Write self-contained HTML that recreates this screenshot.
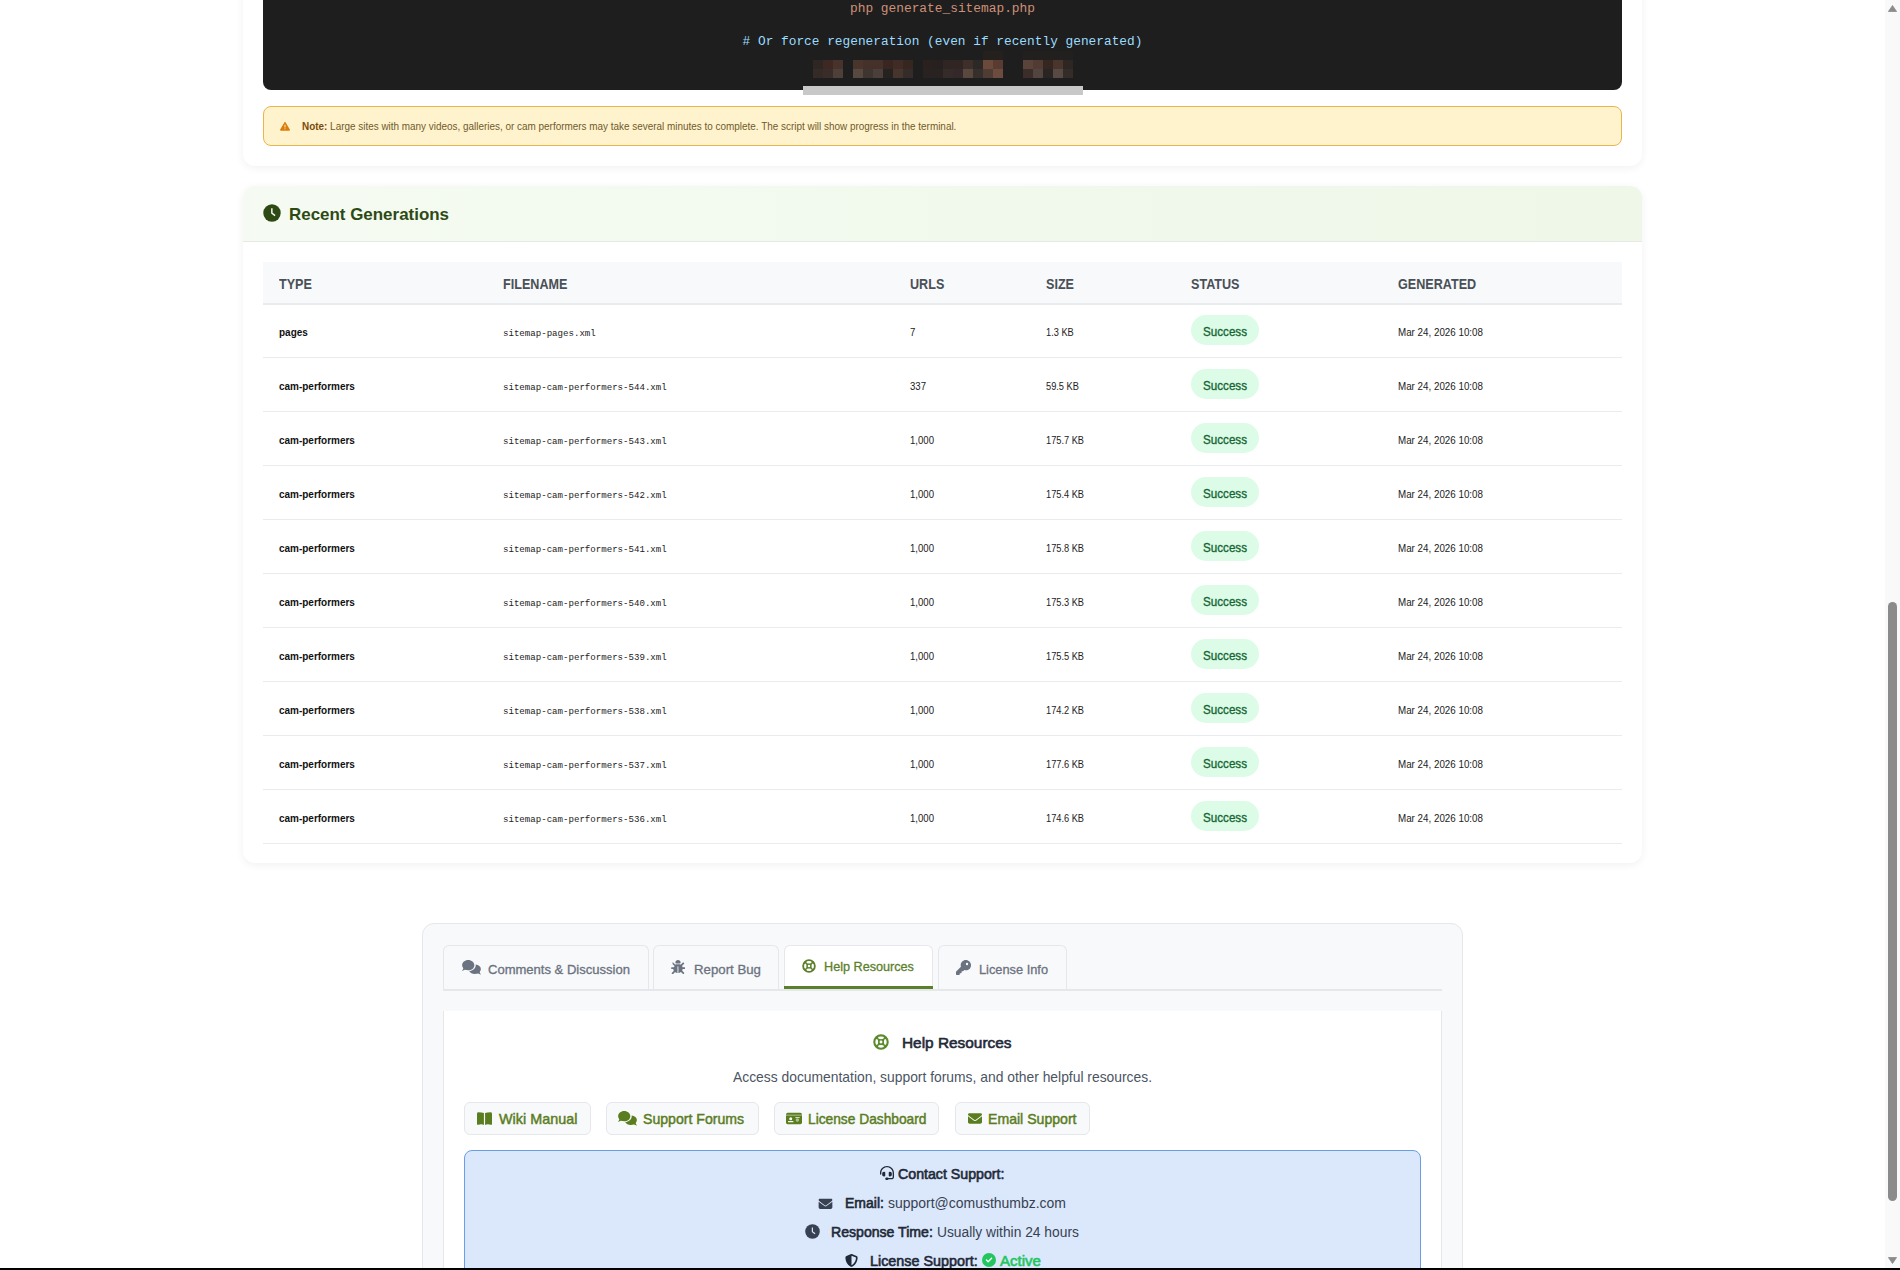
<!DOCTYPE html>
<html><head><meta charset="utf-8"><title>Sitemap Generator</title>
<style>
html,body{margin:0;padding:0;}
body{width:1900px;height:1270px;overflow:hidden;position:relative;background:#ffffff;font-family:'Liberation Sans',sans-serif;}
.b{position:absolute;box-sizing:border-box;}
.t{position:absolute;white-space:nowrap;}
</style></head><body>

<div class="b" style="left:243px;top:-300px;width:1399px;height:466px;background:#fff;border-radius:12px;box-shadow:0 2px 8px rgba(0,0,0,0.06);"></div>
<div class="b" style="left:263px;top:-200px;width:1359px;height:290px;background:#1e1e1e;border-radius:8px;"></div>
<div class="t" style="left:342.5px;width:1200px;text-align:center;top:3px;font-size:12.85px;line-height:12.85px;font-weight:400;color:#ce9178;font-family:'Liberation Mono', monospace;">php generate_sitemap.php</div>
<div class="t" style="left:342.5px;width:1200px;text-align:center;top:36px;font-size:12.82px;line-height:12.82px;font-weight:400;color:#9cdcfe;font-family:'Liberation Mono', monospace;"># Or force regeneration (even if recently generated)</div>
<div class="b" style="left:813px;top:60px;width:10px;height:9px;background:#2e2623;"></div>
<div class="b" style="left:823px;top:60px;width:10px;height:9px;background:#3d2824;"></div>
<div class="b" style="left:833px;top:60px;width:10px;height:9px;background:#47332c;"></div>
<div class="b" style="left:853px;top:60px;width:10px;height:9px;background:#4a352d;"></div>
<div class="b" style="left:863px;top:60px;width:10px;height:9px;background:#45302a;"></div>
<div class="b" style="left:873px;top:60px;width:10px;height:9px;background:#45302a;"></div>
<div class="b" style="left:883px;top:60px;width:10px;height:9px;background:#3a2620;"></div>
<div class="b" style="left:893px;top:60px;width:10px;height:9px;background:#402c25;"></div>
<div class="b" style="left:903px;top:60px;width:10px;height:9px;background:#35261f;"></div>
<div class="b" style="left:923px;top:60px;width:10px;height:9px;background:#2a211e;"></div>
<div class="b" style="left:933px;top:60px;width:10px;height:9px;background:#262120;"></div>
<div class="b" style="left:943px;top:60px;width:10px;height:9px;background:#302522;"></div>
<div class="b" style="left:953px;top:60px;width:10px;height:9px;background:#302522;"></div>
<div class="b" style="left:963px;top:60px;width:10px;height:9px;background:#3f2f2b;"></div>
<div class="b" style="left:973px;top:60px;width:10px;height:9px;background:#2c2825;"></div>
<div class="b" style="left:983px;top:60px;width:10px;height:9px;background:#6b4a3b;"></div>
<div class="b" style="left:993px;top:60px;width:10px;height:9px;background:#5a3b31;"></div>
<div class="b" style="left:1023px;top:60px;width:10px;height:9px;background:#5a4439;"></div>
<div class="b" style="left:1033px;top:60px;width:10px;height:9px;background:#523b33;"></div>
<div class="b" style="left:1043px;top:60px;width:10px;height:9px;background:#35261f;"></div>
<div class="b" style="left:1053px;top:60px;width:10px;height:9px;background:#4a352d;"></div>
<div class="b" style="left:1063px;top:60px;width:10px;height:9px;background:#2e2623;"></div>
<div class="b" style="left:813px;top:69px;width:10px;height:9px;background:#342a26;"></div>
<div class="b" style="left:823px;top:69px;width:10px;height:9px;background:#3a2d29;"></div>
<div class="b" style="left:833px;top:69px;width:10px;height:9px;background:#4f3f39;"></div>
<div class="b" style="left:853px;top:69px;width:10px;height:9px;background:#574840;"></div>
<div class="b" style="left:863px;top:69px;width:10px;height:9px;background:#3e3531;"></div>
<div class="b" style="left:873px;top:69px;width:10px;height:9px;background:#4a3f3a;"></div>
<div class="b" style="left:883px;top:69px;width:10px;height:9px;background:#262220;"></div>
<div class="b" style="left:893px;top:69px;width:10px;height:9px;background:#45352d;"></div>
<div class="b" style="left:903px;top:69px;width:10px;height:9px;background:#352b28;"></div>
<div class="b" style="left:923px;top:69px;width:10px;height:9px;background:#282220;"></div>
<div class="b" style="left:933px;top:69px;width:10px;height:9px;background:#282220;"></div>
<div class="b" style="left:943px;top:69px;width:10px;height:9px;background:#352b28;"></div>
<div class="b" style="left:953px;top:69px;width:10px;height:9px;background:#35282a;"></div>
<div class="b" style="left:963px;top:69px;width:10px;height:9px;background:#5a473d;"></div>
<div class="b" style="left:973px;top:69px;width:10px;height:9px;background:#35302c;"></div>
<div class="b" style="left:983px;top:69px;width:10px;height:9px;background:#4f3c33;"></div>
<div class="b" style="left:993px;top:69px;width:10px;height:9px;background:#6b4c3f;"></div>
<div class="b" style="left:1023px;top:69px;width:10px;height:9px;background:#3b2e2a;"></div>
<div class="b" style="left:1033px;top:69px;width:10px;height:9px;background:#524540;"></div>
<div class="b" style="left:1043px;top:69px;width:10px;height:9px;background:#2a2523;"></div>
<div class="b" style="left:1053px;top:69px;width:10px;height:9px;background:#574a45;"></div>
<div class="b" style="left:1063px;top:69px;width:10px;height:9px;background:#332c29;"></div>
<div class="b" style="left:983px;top:51px;width:20px;height:9px;background:#23201e;"></div>
<div class="b" style="left:1023px;top:51px;width:50px;height:9px;background:#22201e;"></div>
<div class="b" style="left:803px;top:86px;width:280px;height:9px;background:#c8c8c8;"></div>
<div class="b" style="left:263px;top:106px;width:1359px;height:40px;background:#fff3cd;border:1px solid #e9b54f;border-radius:8px;"></div>
<svg class="b" style="left:280px;top:121.8px;width:10px;height:9px" viewBox="0 24 512 464" fill="#d97e0e"><path d="M256 24c14 0 27 8 34 20l216 368c7 12 7 27 0 40s-20 20-34 20H40c-14 0-27-8-34-20s-7-28 0-40L222 44c7-12 20-20 34-20z"/><path d="M232 168h48v140h-48zM256 340a28 28 0 1 1 0 56 28 28 0 1 1 0-56z" fill="#fff3cd"/></svg>
<div class="t" style="left:302px;top:122px;font-size:9.93px;line-height:9.93px;font-weight:400;color:#6f5a2c;font-family:'Liberation Sans', sans-serif;transform:scaleY(1.08);transform-origin:0 8px;"><b style="color:#7a4a0c">Note:</b> Large sites with many videos, galleries, or cam performers may take several minutes to complete. The script will show progress in the terminal.</div>
<div class="b" style="left:243px;top:186px;width:1399px;height:677px;background:#fff;border-radius:12px;box-shadow:0 2px 8px rgba(0,0,0,0.06);overflow:hidden;"></div>
<div class="b" style="left:243px;top:186px;width:1399px;height:56px;background:linear-gradient(90deg,#f5fbf2,#eef7e8);border-bottom:1px solid #e6e8e6;border-radius:12px 12px 0 0;"></div>
<svg class="b" style="left:263px;top:204px;width:18px;height:18px" viewBox="0 0 512 512" fill="#2d4a14"><circle cx="256" cy="256" r="248"/><path d="M232 120h40v132l84 62-24 32-100-74z" fill="#fff"/></svg>
<div class="t" style="left:289px;top:207px;font-size:16.94px;line-height:16.94px;font-weight:700;color:#2d4a14;font-family:'Liberation Sans', sans-serif;">Recent Generations</div>
<div class="b" style="left:263px;top:262px;width:1359px;height:43px;background:#f8f9fa;border-bottom:2px solid #e9ecef;"></div>
<div class="t" style="left:279px;top:279px;font-size:12.6px;line-height:12.6px;font-weight:700;color:#495057;font-family:'Liberation Sans', sans-serif;transform:scaleY(1.15);transform-origin:0 10px;">TYPE</div>
<div class="t" style="left:503px;top:279px;font-size:12.6px;line-height:12.6px;font-weight:700;color:#495057;font-family:'Liberation Sans', sans-serif;transform:scaleY(1.15);transform-origin:0 10px;">FILENAME</div>
<div class="t" style="left:910px;top:279px;font-size:12.6px;line-height:12.6px;font-weight:700;color:#495057;font-family:'Liberation Sans', sans-serif;transform:scaleY(1.15);transform-origin:0 10px;">URLS</div>
<div class="t" style="left:1046px;top:279px;font-size:12.6px;line-height:12.6px;font-weight:700;color:#495057;font-family:'Liberation Sans', sans-serif;transform:scaleY(1.15);transform-origin:0 10px;">SIZE</div>
<div class="t" style="left:1191px;top:279px;font-size:12.6px;line-height:12.6px;font-weight:700;color:#495057;font-family:'Liberation Sans', sans-serif;transform:scaleY(1.15);transform-origin:0 10px;">STATUS</div>
<div class="t" style="left:1398px;top:279px;font-size:12.6px;line-height:12.6px;font-weight:700;color:#495057;font-family:'Liberation Sans', sans-serif;transform:scaleY(1.15);transform-origin:0 10px;">GENERATED</div>
<div class="b" style="left:263px;top:357px;width:1359px;height:1px;background:#e9ecef;"></div>
<div class="t" style="left:279px;top:328px;font-size:9.98px;line-height:9.98px;font-weight:700;color:#111;font-family:'Liberation Sans', sans-serif;transform:scaleY(1.15);transform-origin:0 8px;">pages</div>
<div class="t" style="left:503px;top:329px;font-size:9.11px;line-height:9.11px;font-weight:400;color:#222;font-family:'Liberation Mono', monospace;">sitemap-pages.xml</div>
<div class="t" style="left:910px;top:328px;font-size:9.6px;line-height:9.6px;font-weight:400;color:#222;font-family:'Liberation Sans', sans-serif;transform:scaleY(1.2);transform-origin:0 8px;">7</div>
<div class="t" style="left:1046px;top:329px;font-size:9.24px;line-height:9.24px;font-weight:400;color:#222;font-family:'Liberation Sans', sans-serif;transform:scaleY(1.2);transform-origin:0 7px;">1.3 KB</div>
<div class="b" style="left:1191px;top:315.4px;width:68px;height:29.4px;background:#dcfce7;border-radius:15px;"></div>
<div class="t" style="left:625px;width:1200px;text-align:center;top:326px;font-size:11.64px;line-height:11.64px;font-weight:400;color:#166534;font-family:'Liberation Sans', sans-serif;-webkit-text-stroke:0.3px currentColor;transform:scaleY(1.15);transform-origin:0 10px;">Success</div>
<div class="t" style="left:1398px;top:328px;font-size:9.8px;line-height:9.8px;font-weight:400;color:#222;font-family:'Liberation Sans', sans-serif;transform:scaleY(1.2);transform-origin:0 8px;">Mar 24, 2026 10:08</div>
<div class="b" style="left:263px;top:411px;width:1359px;height:1px;background:#e9ecef;"></div>
<div class="t" style="left:279px;top:382px;font-size:9.98px;line-height:9.98px;font-weight:700;color:#111;font-family:'Liberation Sans', sans-serif;transform:scaleY(1.15);transform-origin:0 8px;">cam-performers</div>
<div class="t" style="left:503px;top:383px;font-size:9.11px;line-height:9.11px;font-weight:400;color:#222;font-family:'Liberation Mono', monospace;">sitemap-cam-performers-544.xml</div>
<div class="t" style="left:910px;top:382px;font-size:9.6px;line-height:9.6px;font-weight:400;color:#222;font-family:'Liberation Sans', sans-serif;transform:scaleY(1.2);transform-origin:0 8px;">337</div>
<div class="t" style="left:1046px;top:383px;font-size:9.24px;line-height:9.24px;font-weight:400;color:#222;font-family:'Liberation Sans', sans-serif;transform:scaleY(1.2);transform-origin:0 7px;">59.5 KB</div>
<div class="b" style="left:1191px;top:369.4px;width:68px;height:29.4px;background:#dcfce7;border-radius:15px;"></div>
<div class="t" style="left:625px;width:1200px;text-align:center;top:380px;font-size:11.64px;line-height:11.64px;font-weight:400;color:#166534;font-family:'Liberation Sans', sans-serif;-webkit-text-stroke:0.3px currentColor;transform:scaleY(1.15);transform-origin:0 10px;">Success</div>
<div class="t" style="left:1398px;top:382px;font-size:9.8px;line-height:9.8px;font-weight:400;color:#222;font-family:'Liberation Sans', sans-serif;transform:scaleY(1.2);transform-origin:0 8px;">Mar 24, 2026 10:08</div>
<div class="b" style="left:263px;top:465px;width:1359px;height:1px;background:#e9ecef;"></div>
<div class="t" style="left:279px;top:436px;font-size:9.98px;line-height:9.98px;font-weight:700;color:#111;font-family:'Liberation Sans', sans-serif;transform:scaleY(1.15);transform-origin:0 8px;">cam-performers</div>
<div class="t" style="left:503px;top:437px;font-size:9.11px;line-height:9.11px;font-weight:400;color:#222;font-family:'Liberation Mono', monospace;">sitemap-cam-performers-543.xml</div>
<div class="t" style="left:910px;top:436px;font-size:9.6px;line-height:9.6px;font-weight:400;color:#222;font-family:'Liberation Sans', sans-serif;transform:scaleY(1.2);transform-origin:0 8px;">1,000</div>
<div class="t" style="left:1046px;top:437px;font-size:9.24px;line-height:9.24px;font-weight:400;color:#222;font-family:'Liberation Sans', sans-serif;transform:scaleY(1.2);transform-origin:0 7px;">175.7 KB</div>
<div class="b" style="left:1191px;top:423.4px;width:68px;height:29.4px;background:#dcfce7;border-radius:15px;"></div>
<div class="t" style="left:625px;width:1200px;text-align:center;top:434px;font-size:11.64px;line-height:11.64px;font-weight:400;color:#166534;font-family:'Liberation Sans', sans-serif;-webkit-text-stroke:0.3px currentColor;transform:scaleY(1.15);transform-origin:0 10px;">Success</div>
<div class="t" style="left:1398px;top:436px;font-size:9.8px;line-height:9.8px;font-weight:400;color:#222;font-family:'Liberation Sans', sans-serif;transform:scaleY(1.2);transform-origin:0 8px;">Mar 24, 2026 10:08</div>
<div class="b" style="left:263px;top:519px;width:1359px;height:1px;background:#e9ecef;"></div>
<div class="t" style="left:279px;top:490px;font-size:9.98px;line-height:9.98px;font-weight:700;color:#111;font-family:'Liberation Sans', sans-serif;transform:scaleY(1.15);transform-origin:0 8px;">cam-performers</div>
<div class="t" style="left:503px;top:491px;font-size:9.11px;line-height:9.11px;font-weight:400;color:#222;font-family:'Liberation Mono', monospace;">sitemap-cam-performers-542.xml</div>
<div class="t" style="left:910px;top:490px;font-size:9.6px;line-height:9.6px;font-weight:400;color:#222;font-family:'Liberation Sans', sans-serif;transform:scaleY(1.2);transform-origin:0 8px;">1,000</div>
<div class="t" style="left:1046px;top:491px;font-size:9.24px;line-height:9.24px;font-weight:400;color:#222;font-family:'Liberation Sans', sans-serif;transform:scaleY(1.2);transform-origin:0 7px;">175.4 KB</div>
<div class="b" style="left:1191px;top:477.4px;width:68px;height:29.4px;background:#dcfce7;border-radius:15px;"></div>
<div class="t" style="left:625px;width:1200px;text-align:center;top:488px;font-size:11.64px;line-height:11.64px;font-weight:400;color:#166534;font-family:'Liberation Sans', sans-serif;-webkit-text-stroke:0.3px currentColor;transform:scaleY(1.15);transform-origin:0 10px;">Success</div>
<div class="t" style="left:1398px;top:490px;font-size:9.8px;line-height:9.8px;font-weight:400;color:#222;font-family:'Liberation Sans', sans-serif;transform:scaleY(1.2);transform-origin:0 8px;">Mar 24, 2026 10:08</div>
<div class="b" style="left:263px;top:573px;width:1359px;height:1px;background:#e9ecef;"></div>
<div class="t" style="left:279px;top:544px;font-size:9.98px;line-height:9.98px;font-weight:700;color:#111;font-family:'Liberation Sans', sans-serif;transform:scaleY(1.15);transform-origin:0 8px;">cam-performers</div>
<div class="t" style="left:503px;top:545px;font-size:9.11px;line-height:9.11px;font-weight:400;color:#222;font-family:'Liberation Mono', monospace;">sitemap-cam-performers-541.xml</div>
<div class="t" style="left:910px;top:544px;font-size:9.6px;line-height:9.6px;font-weight:400;color:#222;font-family:'Liberation Sans', sans-serif;transform:scaleY(1.2);transform-origin:0 8px;">1,000</div>
<div class="t" style="left:1046px;top:545px;font-size:9.24px;line-height:9.24px;font-weight:400;color:#222;font-family:'Liberation Sans', sans-serif;transform:scaleY(1.2);transform-origin:0 7px;">175.8 KB</div>
<div class="b" style="left:1191px;top:531.4px;width:68px;height:29.4px;background:#dcfce7;border-radius:15px;"></div>
<div class="t" style="left:625px;width:1200px;text-align:center;top:542px;font-size:11.64px;line-height:11.64px;font-weight:400;color:#166534;font-family:'Liberation Sans', sans-serif;-webkit-text-stroke:0.3px currentColor;transform:scaleY(1.15);transform-origin:0 10px;">Success</div>
<div class="t" style="left:1398px;top:544px;font-size:9.8px;line-height:9.8px;font-weight:400;color:#222;font-family:'Liberation Sans', sans-serif;transform:scaleY(1.2);transform-origin:0 8px;">Mar 24, 2026 10:08</div>
<div class="b" style="left:263px;top:627px;width:1359px;height:1px;background:#e9ecef;"></div>
<div class="t" style="left:279px;top:598px;font-size:9.98px;line-height:9.98px;font-weight:700;color:#111;font-family:'Liberation Sans', sans-serif;transform:scaleY(1.15);transform-origin:0 8px;">cam-performers</div>
<div class="t" style="left:503px;top:599px;font-size:9.11px;line-height:9.11px;font-weight:400;color:#222;font-family:'Liberation Mono', monospace;">sitemap-cam-performers-540.xml</div>
<div class="t" style="left:910px;top:598px;font-size:9.6px;line-height:9.6px;font-weight:400;color:#222;font-family:'Liberation Sans', sans-serif;transform:scaleY(1.2);transform-origin:0 8px;">1,000</div>
<div class="t" style="left:1046px;top:599px;font-size:9.24px;line-height:9.24px;font-weight:400;color:#222;font-family:'Liberation Sans', sans-serif;transform:scaleY(1.2);transform-origin:0 7px;">175.3 KB</div>
<div class="b" style="left:1191px;top:585.4px;width:68px;height:29.4px;background:#dcfce7;border-radius:15px;"></div>
<div class="t" style="left:625px;width:1200px;text-align:center;top:596px;font-size:11.64px;line-height:11.64px;font-weight:400;color:#166534;font-family:'Liberation Sans', sans-serif;-webkit-text-stroke:0.3px currentColor;transform:scaleY(1.15);transform-origin:0 10px;">Success</div>
<div class="t" style="left:1398px;top:598px;font-size:9.8px;line-height:9.8px;font-weight:400;color:#222;font-family:'Liberation Sans', sans-serif;transform:scaleY(1.2);transform-origin:0 8px;">Mar 24, 2026 10:08</div>
<div class="b" style="left:263px;top:681px;width:1359px;height:1px;background:#e9ecef;"></div>
<div class="t" style="left:279px;top:652px;font-size:9.98px;line-height:9.98px;font-weight:700;color:#111;font-family:'Liberation Sans', sans-serif;transform:scaleY(1.15);transform-origin:0 8px;">cam-performers</div>
<div class="t" style="left:503px;top:653px;font-size:9.11px;line-height:9.11px;font-weight:400;color:#222;font-family:'Liberation Mono', monospace;">sitemap-cam-performers-539.xml</div>
<div class="t" style="left:910px;top:652px;font-size:9.6px;line-height:9.6px;font-weight:400;color:#222;font-family:'Liberation Sans', sans-serif;transform:scaleY(1.2);transform-origin:0 8px;">1,000</div>
<div class="t" style="left:1046px;top:653px;font-size:9.24px;line-height:9.24px;font-weight:400;color:#222;font-family:'Liberation Sans', sans-serif;transform:scaleY(1.2);transform-origin:0 7px;">175.5 KB</div>
<div class="b" style="left:1191px;top:639.4px;width:68px;height:29.4px;background:#dcfce7;border-radius:15px;"></div>
<div class="t" style="left:625px;width:1200px;text-align:center;top:650px;font-size:11.64px;line-height:11.64px;font-weight:400;color:#166534;font-family:'Liberation Sans', sans-serif;-webkit-text-stroke:0.3px currentColor;transform:scaleY(1.15);transform-origin:0 10px;">Success</div>
<div class="t" style="left:1398px;top:652px;font-size:9.8px;line-height:9.8px;font-weight:400;color:#222;font-family:'Liberation Sans', sans-serif;transform:scaleY(1.2);transform-origin:0 8px;">Mar 24, 2026 10:08</div>
<div class="b" style="left:263px;top:735px;width:1359px;height:1px;background:#e9ecef;"></div>
<div class="t" style="left:279px;top:706px;font-size:9.98px;line-height:9.98px;font-weight:700;color:#111;font-family:'Liberation Sans', sans-serif;transform:scaleY(1.15);transform-origin:0 8px;">cam-performers</div>
<div class="t" style="left:503px;top:707px;font-size:9.11px;line-height:9.11px;font-weight:400;color:#222;font-family:'Liberation Mono', monospace;">sitemap-cam-performers-538.xml</div>
<div class="t" style="left:910px;top:706px;font-size:9.6px;line-height:9.6px;font-weight:400;color:#222;font-family:'Liberation Sans', sans-serif;transform:scaleY(1.2);transform-origin:0 8px;">1,000</div>
<div class="t" style="left:1046px;top:707px;font-size:9.24px;line-height:9.24px;font-weight:400;color:#222;font-family:'Liberation Sans', sans-serif;transform:scaleY(1.2);transform-origin:0 7px;">174.2 KB</div>
<div class="b" style="left:1191px;top:693.4px;width:68px;height:29.4px;background:#dcfce7;border-radius:15px;"></div>
<div class="t" style="left:625px;width:1200px;text-align:center;top:704px;font-size:11.64px;line-height:11.64px;font-weight:400;color:#166534;font-family:'Liberation Sans', sans-serif;-webkit-text-stroke:0.3px currentColor;transform:scaleY(1.15);transform-origin:0 10px;">Success</div>
<div class="t" style="left:1398px;top:706px;font-size:9.8px;line-height:9.8px;font-weight:400;color:#222;font-family:'Liberation Sans', sans-serif;transform:scaleY(1.2);transform-origin:0 8px;">Mar 24, 2026 10:08</div>
<div class="b" style="left:263px;top:789px;width:1359px;height:1px;background:#e9ecef;"></div>
<div class="t" style="left:279px;top:760px;font-size:9.98px;line-height:9.98px;font-weight:700;color:#111;font-family:'Liberation Sans', sans-serif;transform:scaleY(1.15);transform-origin:0 8px;">cam-performers</div>
<div class="t" style="left:503px;top:761px;font-size:9.11px;line-height:9.11px;font-weight:400;color:#222;font-family:'Liberation Mono', monospace;">sitemap-cam-performers-537.xml</div>
<div class="t" style="left:910px;top:760px;font-size:9.6px;line-height:9.6px;font-weight:400;color:#222;font-family:'Liberation Sans', sans-serif;transform:scaleY(1.2);transform-origin:0 8px;">1,000</div>
<div class="t" style="left:1046px;top:761px;font-size:9.24px;line-height:9.24px;font-weight:400;color:#222;font-family:'Liberation Sans', sans-serif;transform:scaleY(1.2);transform-origin:0 7px;">177.6 KB</div>
<div class="b" style="left:1191px;top:747.4px;width:68px;height:29.4px;background:#dcfce7;border-radius:15px;"></div>
<div class="t" style="left:625px;width:1200px;text-align:center;top:758px;font-size:11.64px;line-height:11.64px;font-weight:400;color:#166534;font-family:'Liberation Sans', sans-serif;-webkit-text-stroke:0.3px currentColor;transform:scaleY(1.15);transform-origin:0 10px;">Success</div>
<div class="t" style="left:1398px;top:760px;font-size:9.8px;line-height:9.8px;font-weight:400;color:#222;font-family:'Liberation Sans', sans-serif;transform:scaleY(1.2);transform-origin:0 8px;">Mar 24, 2026 10:08</div>
<div class="b" style="left:263px;top:843px;width:1359px;height:1px;background:#e9ecef;"></div>
<div class="t" style="left:279px;top:814px;font-size:9.98px;line-height:9.98px;font-weight:700;color:#111;font-family:'Liberation Sans', sans-serif;transform:scaleY(1.15);transform-origin:0 8px;">cam-performers</div>
<div class="t" style="left:503px;top:815px;font-size:9.11px;line-height:9.11px;font-weight:400;color:#222;font-family:'Liberation Mono', monospace;">sitemap-cam-performers-536.xml</div>
<div class="t" style="left:910px;top:814px;font-size:9.6px;line-height:9.6px;font-weight:400;color:#222;font-family:'Liberation Sans', sans-serif;transform:scaleY(1.2);transform-origin:0 8px;">1,000</div>
<div class="t" style="left:1046px;top:815px;font-size:9.24px;line-height:9.24px;font-weight:400;color:#222;font-family:'Liberation Sans', sans-serif;transform:scaleY(1.2);transform-origin:0 7px;">174.6 KB</div>
<div class="b" style="left:1191px;top:801.4px;width:68px;height:29.4px;background:#dcfce7;border-radius:15px;"></div>
<div class="t" style="left:625px;width:1200px;text-align:center;top:812px;font-size:11.64px;line-height:11.64px;font-weight:400;color:#166534;font-family:'Liberation Sans', sans-serif;-webkit-text-stroke:0.3px currentColor;transform:scaleY(1.15);transform-origin:0 10px;">Success</div>
<div class="t" style="left:1398px;top:814px;font-size:9.8px;line-height:9.8px;font-weight:400;color:#222;font-family:'Liberation Sans', sans-serif;transform:scaleY(1.2);transform-origin:0 8px;">Mar 24, 2026 10:08</div>
<div class="b" style="left:422px;top:923px;width:1041px;height:400px;background:#f8f9fa;border:1px solid #e5e7eb;border-radius:12px;"></div>
<div class="b" style="left:443px;top:989px;width:999px;height:2px;background:#e5e7eb;"></div>
<div class="b" style="left:443px;top:945px;width:206px;height:44px;background:#f8f9fa;border:1px solid #e5e7eb;border-bottom:none;border-radius:6px 6px 0 0;"></div>
<div class="b" style="left:653px;top:945px;width:126px;height:44px;background:#f8f9fa;border:1px solid #e5e7eb;border-bottom:none;border-radius:6px 6px 0 0;"></div>
<div class="b" style="left:784px;top:945px;width:149px;height:44px;background:#fff;border:1px solid #e5e7eb;border-bottom:none;border-radius:6px 6px 0 0;"></div>
<div class="b" style="left:938px;top:945px;width:129px;height:44px;background:#f8f9fa;border:1px solid #e5e7eb;border-bottom:none;border-radius:6px 6px 0 0;"></div>
<div class="b" style="left:784px;top:986px;width:149px;height:3px;background:#5b7f2b;"></div>
<svg class="b" style="left:461.5px;top:960px;width:19px;height:15px" viewBox="0 0 640 512" fill="#6b7280"><path d="M208 352c115 0 208-79 208-176S323 0 208 0 0 79 0 176c0 39 15 74 40 103-4 28-16 52-38 72-2 2-3 5-2 8s4 5 7 5c34 0 64-12 88-28 33 10 72 16 113 16z"/><path d="M448 473c-24 16-54 28-88 28-3 0-6-2-7-5s0-6 2-8c22-20 34-44 38-72-25-29-40-64-40-103 0-97 93-176 208-176z" opacity="0"/><path d="M640 304c0 39-15 74-40 103 4 28 16 52 38 72 2 2 3 5 2 8s-4 5-7 5c-34 0-64-12-88-28-33 10-72 16-113 16-85 0-158-43-190-105 118-6 222-90 222-199 0-8-1-15-2-23 100 14 178 75 178 151z"/></svg>
<div class="t" style="left:488px;top:963px;font-size:13.04px;line-height:13.04px;font-weight:400;color:#6b7280;font-family:'Liberation Sans', sans-serif;-webkit-text-stroke:0.3px currentColor;">Comments &amp; Discussion</div>
<svg class="b" style="left:671px;top:960px;width:14px;height:14px" viewBox="0 0 512 512" fill="#6b7280"><path d="M256 0c53 0 96 43 96 96v6c0 17-14 26-32 26H192c-18 0-32-9-32-26v-6c0-53 43-96 96-96zM41 105c13-13 33-13 45 0l64 64 2 2c16-11 35-17 56-17h96c21 0 40 6 56 17l2-2 64-64c13-13 33-13 45 0s13 33 0 45l-64 64-2 2c9 14 15 30 17 47h81c18 0 32 14 32 32s-14 32-32 32h-80c0 24-5 47-15 67l2 2 64 64c13 13 13 33 0 45s-33 13-45 0l-64-64-2-2c-26 21-58 35-93 37V240c0-9-7-16-16-16s-16 7-16 16v239c-35-3-67-16-93-37l-2 2-64 64c-13 13-33 13-45 0s-13-33 0-45l64-64 2-2c-10-20-15-43-15-67H32c-18 0-32-14-32-32s14-32 32-32h81c2-17 8-33 17-47l-2-2-64-64c-13-13-13-33 0-45z"/></svg>
<div class="t" style="left:694px;top:963px;font-size:13.24px;line-height:13.24px;font-weight:400;color:#6b7280;font-family:'Liberation Sans', sans-serif;-webkit-text-stroke:0.3px currentColor;">Report Bug</div>
<svg class="b" style="left:802px;top:959px;width:14px;height:14px" viewBox="0 0 512 512" fill="#5b7f2b"><path fill-rule="evenodd" d="M256 8a248 248 0 1 1 0 496 248 248 0 1 1 0-496zM160 120a96 44 0 1 0 192 0 96 44 0 1 0-192 0zM160 392a96 44 0 1 0 192 0 96 44 0 1 0-192 0zM76 256a44 96 0 1 0 88 0 44 96 0 1 0-88 0zM348 256a44 96 0 1 0 88 0 44 96 0 1 0-88 0zM210 256a46 46 0 1 0 92 0 46 46 0 1 0-92 0z"/></svg>
<div class="t" style="left:824px;top:961px;font-size:12.65px;line-height:12.65px;font-weight:400;color:#5b7f2b;font-family:'Liberation Sans', sans-serif;-webkit-text-stroke:0.3px currentColor;">Help Resources</div>
<svg class="b" style="left:956px;top:960px;width:15px;height:15px" viewBox="0 0 512 512" fill="#6b7280"><path d="M336 352c97 0 176-79 176-176S433 0 336 0 160 79 160 176c0 19 3 37 8 54L7 391c-4 4-7 10-7 17v80c0 13 11 24 24 24h80c13 0 24-11 24-24v-40h40c13 0 24-11 24-24v-40h40c6 0 12-3 17-7l33-33c17 5 35 8 54 8zm40-256a40 40 0 1 1 0 80 40 40 0 1 1 0-80z"/></svg>
<div class="t" style="left:979px;top:964px;font-size:12.8px;line-height:12.8px;font-weight:400;color:#6b7280;font-family:'Liberation Sans', sans-serif;-webkit-text-stroke:0.3px currentColor;">License Info</div>
<div class="b" style="left:443px;top:1011px;width:999px;height:300px;background:#fff;border:1px solid #e5e7eb;border-top:none;"></div>
<svg class="b" style="left:873px;top:1034px;width:16px;height:16px" viewBox="0 0 512 512" fill="#5b8a2a"><path fill-rule="evenodd" d="M256 8a248 248 0 1 1 0 496 248 248 0 1 1 0-496zM160 120a96 44 0 1 0 192 0 96 44 0 1 0-192 0zM160 392a96 44 0 1 0 192 0 96 44 0 1 0-192 0zM76 256a44 96 0 1 0 88 0 44 96 0 1 0-88 0zM348 256a44 96 0 1 0 88 0 44 96 0 1 0-88 0zM210 256a46 46 0 1 0 92 0 46 46 0 1 0-92 0z"/></svg>
<div class="t" style="left:902px;top:1035px;font-size:15.4px;line-height:15.4px;font-weight:400;color:#1f2937;font-family:'Liberation Sans', sans-serif;-webkit-text-stroke:0.6px currentColor;">Help Resources</div>
<div class="t" style="left:342.5px;width:1200px;text-align:center;top:1071px;font-size:13.86px;line-height:13.86px;font-weight:400;color:#4b5563;font-family:'Liberation Sans', sans-serif;">Access documentation, support forums, and other helpful resources.</div>
<div class="b" style="left:464px;top:1102px;width:127px;height:33px;background:#f8f9fa;border:1px solid #e5e7eb;border-radius:6px;"></div>
<svg class="b" style="left:476px;top:1111px;width:17px;height:15px" viewBox="0 0 512 512" fill="#5a7d1f"><path d="M0 90Q0 40 50 40Q160 40 236 70V480Q160 430 40 470Q0 480 0 440zM276 70Q352 40 462 40Q512 40 512 90V440Q512 480 472 470Q352 430 276 480z"/></svg>
<div class="t" style="left:499px;top:1112px;font-size:14.4px;line-height:14.4px;font-weight:400;color:#5a7d1f;font-family:'Liberation Sans', sans-serif;-webkit-text-stroke:0.45px currentColor;">Wiki Manual</div>
<div class="b" style="left:606px;top:1102px;width:153px;height:33px;background:#f8f9fa;border:1px solid #e5e7eb;border-radius:6px;"></div>
<svg class="b" style="left:618px;top:1111px;width:19px;height:15px" viewBox="0 0 640 512" fill="#5a7d1f"><path d="M208 352c115 0 208-79 208-176S323 0 208 0 0 79 0 176c0 39 15 74 40 103-4 28-16 52-38 72-2 2-3 5-2 8s4 5 7 5c34 0 64-12 88-28 33 10 72 16 113 16z"/><path d="M448 473c-24 16-54 28-88 28-3 0-6-2-7-5s0-6 2-8c22-20 34-44 38-72-25-29-40-64-40-103 0-97 93-176 208-176z" opacity="0"/><path d="M640 304c0 39-15 74-40 103 4 28 16 52 38 72 2 2 3 5 2 8s-4 5-7 5c-34 0-64-12-88-28-33 10-72 16-113 16-85 0-158-43-190-105 118-6 222-90 222-199 0-8-1-15-2-23 100 14 178 75 178 151z"/></svg>
<div class="t" style="left:643px;top:1112px;font-size:14.1px;line-height:14.1px;font-weight:400;color:#5a7d1f;font-family:'Liberation Sans', sans-serif;-webkit-text-stroke:0.45px currentColor;">Support Forums</div>
<div class="b" style="left:774px;top:1102px;width:165px;height:33px;background:#f8f9fa;border:1px solid #e5e7eb;border-radius:6px;"></div>
<svg class="b" style="left:786px;top:1111px;width:16px;height:15px" viewBox="0 0 576 512" fill="#5a7d1f"><rect x="0" y="48" width="576" height="416" rx="60"/><rect x="0" y="118" width="576" height="34" fill="#f8f9fa" opacity="0.55"/><circle cx="170" cy="262" r="54" fill="#f8f9fa"/><rect x="70" y="350" width="200" height="40" rx="20" fill="#f8f9fa"/><rect x="330" y="206" width="170" height="32" rx="16" fill="#f8f9fa" opacity="0.75"/><circle cx="410" cy="312" r="62" fill="#f8f9fa" opacity="0.55"/></svg>
<div class="t" style="left:808px;top:1113px;font-size:13.75px;line-height:13.75px;font-weight:400;color:#5a7d1f;font-family:'Liberation Sans', sans-serif;-webkit-text-stroke:0.45px currentColor;">License Dashboard</div>
<div class="b" style="left:955px;top:1102px;width:135px;height:33px;background:#f8f9fa;border:1px solid #e5e7eb;border-radius:6px;"></div>
<svg class="b" style="left:968px;top:1111px;width:14px;height:15px" viewBox="0 0 512 512" fill="#5a7d1f"><path d="M48 64C21 64 0 85 0 112c0 15 7 29 19 38l218 164c11 9 27 9 38 0l218-164c12-9 19-23 19-38 0-27-21-48-48-48zM0 176v208c0 35 29 64 64 64h384c35 0 64-29 64-64V176L294 339c-23 17-53 17-76 0z"/></svg>
<div class="t" style="left:988px;top:1112px;font-size:14.1px;line-height:14.1px;font-weight:400;color:#5a7d1f;font-family:'Liberation Sans', sans-serif;-webkit-text-stroke:0.45px currentColor;">Email Support</div>
<div class="b" style="left:464px;top:1150px;width:957px;height:200px;background:#dbe8fb;border:1px solid #6a9de8;border-radius:8px;"></div>
<svg class="b" style="left:880px;top:1166px;width:14px;height:14px" viewBox="0 0 512 512" fill="#1f2937"><path d="M256 48C141 48 48 141 48 256v40c0 13-11 24-24 24S0 309 0 296v-40C0 115 115 0 256 0s256 115 256 256v144c0 49-40 88-88 88H314c-8 14-24 24-42 24h-32c-27 0-48-21-48-48s21-48 48-48h32c18 0 34 10 42 24h110c22 0 40-18 40-40V256c0-115-93-208-208-208zM144 208h16c18 0 32 14 32 32v112c0 18-14 32-32 32h-16c-35 0-64-29-64-64v-48c0-35 29-64 64-64zm224 0c35 0 64 29 64 64v48c0 35-29 64-64 64h-16c-18 0-32-14-32-32V240c0-18 14-32 32-32z"/></svg>
<div class="t" style="left:898px;top:1167px;font-size:14.2px;line-height:14.2px;font-weight:400;color:#1f2937;font-family:'Liberation Sans', sans-serif;-webkit-text-stroke:0.6px currentColor;">Contact Support:</div>
<svg class="b" style="left:818px;top:1196.5px;width:15px;height:12px" viewBox="0 0 512 448" fill="#374151"><path d="M48 64C21 64 0 85 0 112c0 15 7 29 19 38l218 164c11 9 27 9 38 0l218-164c12-9 19-23 19-38 0-27-21-48-48-48zM0 176v208c0 35 29 64 64 64h384c35 0 64-29 64-64V176L294 339c-23 17-53 17-76 0z"/></svg>
<div class="t" style="left:845px;top:1196px;font-size:14.0px;line-height:14.0px;font-weight:400;color:#1f2937;font-family:'Liberation Sans', sans-serif;-webkit-text-stroke:0.6px currentColor;">Email:</div>
<div class="t" style="left:888px;top:1197px;font-size:13.97px;line-height:13.97px;font-weight:400;color:#374151;font-family:'Liberation Sans', sans-serif;">support@comusthumbz.com</div>
<svg class="b" style="left:805px;top:1224px;width:15px;height:15px" viewBox="0 0 512 512" fill="#374151"><circle cx="256" cy="256" r="248"/><path d="M232 120h40v132l84 62-24 32-100-74z" fill="#dbe8fb"/></svg>
<div class="t" style="left:831px;top:1225px;font-size:14.1px;line-height:14.1px;font-weight:400;color:#1f2937;font-family:'Liberation Sans', sans-serif;-webkit-text-stroke:0.6px currentColor;">Response Time:</div>
<div class="t" style="left:937px;top:1226px;font-size:13.81px;line-height:13.81px;font-weight:400;color:#374151;font-family:'Liberation Sans', sans-serif;">Usually within 24 hours</div>
<svg class="b" style="left:845px;top:1253px;width:13px;height:15px" viewBox="0 0 512 512" fill="#1f2937"><path fill-rule="evenodd" d="M256 0c5 0 9 1 13 3l188 80c22 9 39 31 39 57 0 99-41 281-213 363-17 8-36 8-53 0C58 421 17 239 17 140c0-26 17-48 39-57L243 3c4-2 9-3 13-3zm0 67v378c138-67 175-215 176-303z"/></svg>
<div class="t" style="left:870px;top:1254px;font-size:14.35px;line-height:14.35px;font-weight:400;color:#1f2937;font-family:'Liberation Sans', sans-serif;-webkit-text-stroke:0.6px currentColor;">License Support:</div>
<svg class="b" style="left:982px;top:1253px;width:14px;height:14px" viewBox="0 0 512 512" fill="#22c55e"><circle cx="256" cy="256" r="256"/><path d="M369 209L241 337c-9 9-25 9-34 0l-64-64c-9-9-9-25 0-34s25-9 34 0l47 47 111-111c9-9 25-9 34 0s9 25 0 34z" fill="#fff"/></svg>
<div class="t" style="left:1000px;top:1253px;font-size:15.0px;line-height:15.0px;font-weight:400;color:#22c55e;font-family:'Liberation Sans', sans-serif;-webkit-text-stroke:0.6px currentColor;">Active</div>
<div class="b" style="left:1885px;top:0px;width:15px;height:1268px;background:#f9f9f9;"></div>
<svg class="b" style="left:1888px;top:5px;width:9px;height:7px" viewBox="0 0 9 7" fill="#8b8b8b"><path d="M4.5 0.5 L8.6 6.5 H0.4 Z" stroke="#8b8b8b" stroke-width="0.8" stroke-linejoin="round"/></svg>
<div class="b" style="left:1888px;top:602px;width:9px;height:599px;background:#8b8b8b;border-radius:4.5px;"></div>
<svg class="b" style="left:1888px;top:1257px;width:9px;height:7px" viewBox="0 0 9 7" fill="#8b8b8b"><path d="M0.4 0.5 H8.6 L4.5 6.5 Z" stroke="#8b8b8b" stroke-width="0.8" stroke-linejoin="round"/></svg>
<div class="b" style="left:0px;top:1268px;width:1900px;height:2px;background:#000;"></div>
</body></html>
